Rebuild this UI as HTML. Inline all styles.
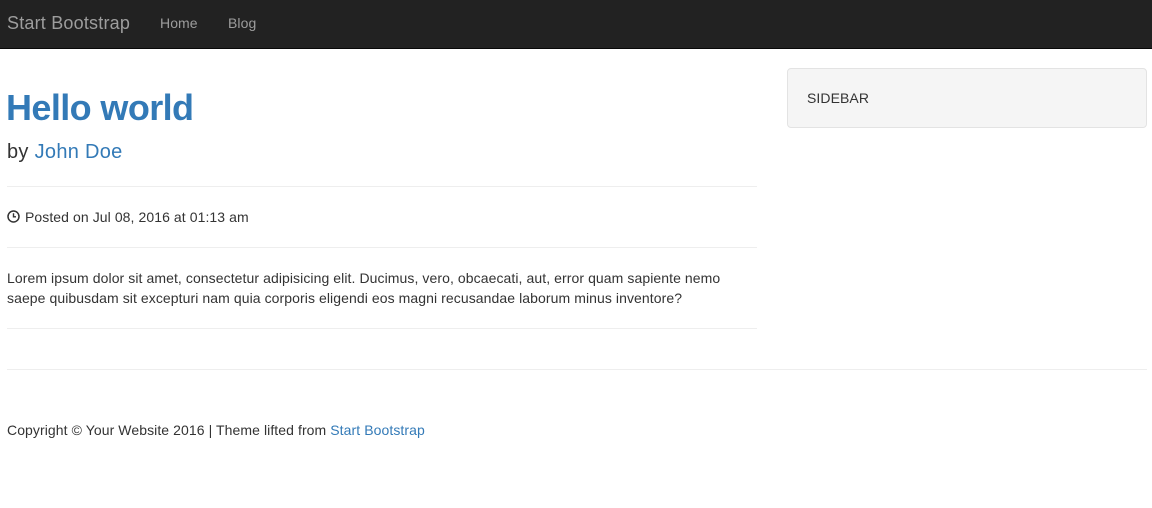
<!DOCTYPE html>
<html><head><style>
*{margin:0;padding:0;box-sizing:border-box}
body{width:1152px;height:508px;background:#fff;font-family:"Liberation Sans",Helvetica,Arial,sans-serif;font-size:14px;color:#333;position:relative;overflow:hidden;letter-spacing:0.08px}
.nav{position:absolute;left:0;top:0;width:1152px;height:49px;background:#222;border-bottom:1px solid #080808}
.a{position:absolute;white-space:nowrap}
a{color:#337ab7;text-decoration:none}
.hr{position:absolute;height:1px;background:#eee}
</style></head><body>
<div class="nav">
<div class="a" style="left:7px;top:13px;font-size:18px;color:#9d9d9d;letter-spacing:0.2px">Start Bootstrap</div>
<div class="a" style="left:160px;top:15px;color:#9d9d9d">Home</div>
<div class="a" style="left:228px;top:15px;color:#9d9d9d">Blog</div>
</div>
<div class="a" style="left:6px;top:88px;font-size:36px;font-weight:bold;color:#337ab7;line-height:40px;letter-spacing:-0.6px">Hello world</div>
<div class="a" style="left:7px;top:140px;font-size:20px;line-height:24px;letter-spacing:0.3px">by <a>John Doe</a></div>
<div class="hr" style="left:7px;top:186px;width:750px"></div>
<div class="a" style="left:7px;top:209px;line-height:16px"><svg width="13" height="13" viewBox="0 0 13 13" style="vertical-align:-1px;margin-right:1px"><circle cx="6.5" cy="6.5" r="5.5" fill="none" stroke="#333" stroke-width="1.5"/><path d="M6.5 3.3V6.8H9" fill="none" stroke="#333" stroke-width="1.4"/></svg> Posted on Jul 08, 2016 at 01:13 am</div>
<div class="hr" style="left:7px;top:247px;width:750px"></div>
<div class="a" style="left:7px;top:268px;line-height:20px">Lorem ipsum dolor sit amet, consectetur adipisicing elit. Ducimus, vero, obcaecati, aut, error quam sapiente nemo<br>saepe quibusdam sit excepturi nam quia corporis eligendi eos magni recusandae laborum minus inventore?</div>
<div class="hr" style="left:7px;top:328px;width:750px"></div>
<div class="a" style="left:787px;top:68px;width:360px;height:60px;background:#f5f5f5;border:1px solid #e3e3e3;border-radius:4px;padding:21px 19px;line-height:16px">SIDEBAR</div>
<div class="hr" style="left:7px;top:369px;width:1140px"></div>
<div class="a" style="left:7px;top:422px;line-height:16px">Copyright © Your Website 2016 | Theme lifted from <a>Start Bootstrap</a></div>
</body></html>
